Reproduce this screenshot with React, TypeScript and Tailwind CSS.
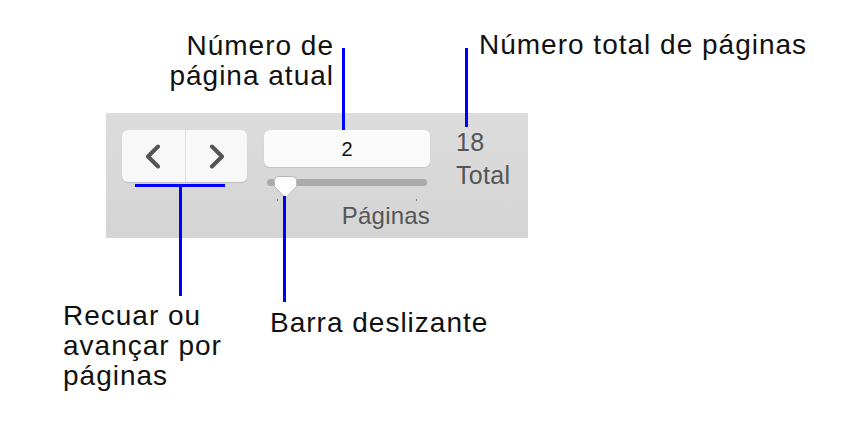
import React from 'react';

const label = "font-['Liberation_Sans',Arial,sans-serif] text-[28px] leading-[30px] tracking-[1px] text-[#111]";

function Chevron({ dir }: { dir: 'left' | 'right' }) {
    const points = dir === 'left' ? '13,2.5 3,12.5 13,22.5' : '4,2.5 14,12.5 4,22.5';
    return (
        <svg width="17" height="25" viewBox="0 0 17 25" fill="none">
            <polyline points={points} stroke="#555555" strokeWidth="4" strokeLinecap="round" strokeLinejoin="round" />
        </svg>
    );
}

function Thumb() {
    return (
        <svg width="23" height="23" viewBox="0 0 23 23" className="absolute left-[7px] top-[-3px]">
            <path d="M4.5 0.5 H18.5 Q22.5 0.5 22.5 4.5 V10.5 L11.5 22 L0.5 10.5 V4.5 Q0.5 0.5 4.5 0.5 Z" fill="#fdfdfd" stroke="#b8b8b8" strokeWidth="1" />
        </svg>
    );
}

function Toolbar() {
    return (
        <div className="ml-[106px] mt-[113px] w-[422px] h-[125px] flex items-start pl-[16px] pt-[17px] bg-gradient-to-b from-[#dcdcdc] to-[#d4d4d4] font-['Liberation_Sans',Arial,sans-serif]">
            {/* previous / next page */}
            <div className="w-[125px] h-[52px] flex rounded-[6px] bg-[#f8f8f8] shadow-[0_1px_1px_rgba(0,0,0,0.12)]">
                <button className="w-[64px] h-full flex items-center justify-center border-r border-[#dddddd]">
                    <Chevron dir="left" />
                </button>
                <button className="flex-1 h-full flex items-center justify-center">
                    <Chevron dir="right" />
                </button>
            </div>

            {/* current page field + slider */}
            <div className="ml-[17px] w-[166px] flex flex-col">
                <div className="h-[37px] rounded-[6px] bg-[#fafafa] shadow-[0_1px_1px_rgba(0,0,0,0.1)] flex items-center justify-center text-[20px] text-[#111]">
                    2
                </div>
                <div className="relative mt-[12px] mx-[3px] h-[7px] rounded-full bg-[#ababab]">
                    <Thumb />
                </div>
                <div className="flex justify-between px-[13px] pt-[13px]">
                    <span className="block w-[1px] h-[2px] bg-[#777]" />
                    <span className="block w-[1px] h-[2px] bg-[#777]" />
                </div>
                <div className="mt-[1px] text-right text-[24px] leading-[28px] tracking-[0.2px] text-[#555]">Páginas</div>
            </div>

            {/* total */}
            <div className="ml-[26px] -mt-[4px] text-[25px] leading-[33px] tracking-[0.3px] text-[#555]">
                <div>18</div>
                <div>Total</div>
            </div>
        </div>
    );
}

export default function App() {
    return (
        <div className="relative w-[860px] h-[435px] bg-white overflow-hidden">
            <Toolbar />

            {/* callouts */}
            <div className={`absolute top-[31px] right-[526px] text-right ${label}`}>
                <div>Número de</div>
                <div>página atual</div>
            </div>
            <div className="absolute left-[342px] top-[48px] w-[3px] h-[82px] bg-[#0000ff]" />

            <div className={`absolute top-[30px] left-[479px] whitespace-nowrap ${label}`}>Número total de páginas</div>
            <div className="absolute left-[465px] top-[48px] w-[3px] h-[79px] bg-[#0000ff]" />

            <div className="absolute left-[135px] top-[184px] w-[90px] h-[3px] bg-[#0000ff]" />
            <div className="absolute left-[179px] top-[184px] w-[3px] h-[112px] bg-[#0000ff]" />
            <div className={`absolute top-[301px] left-[63px] ${label}`}>
                <div>Recuar ou</div>
                <div>avançar por</div>
                <div>páginas</div>
            </div>

            <div className="absolute left-[283px] top-[196px] w-[3px] h-[106px] bg-[#0000ff]" />
            <div className={`absolute top-[308px] left-[270px] whitespace-nowrap ${label}`}>Barra deslizante</div>
        </div>
    );
}
